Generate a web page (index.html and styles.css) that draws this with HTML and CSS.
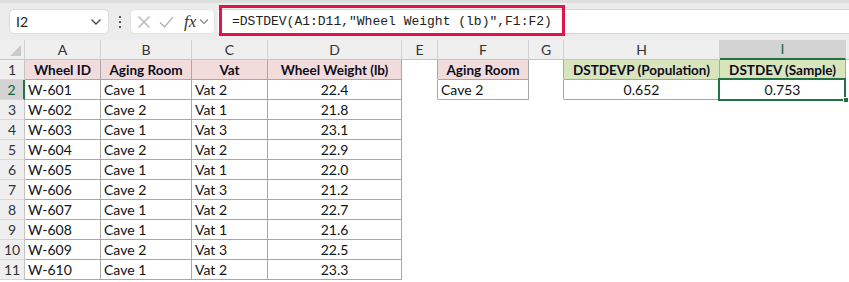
FILE: index.html
```html
<!DOCTYPE html>
<html>
<head>
    <meta charset="UTF-8">
    <title>DSTDEV</title>
    <link rel="stylesheet" href="styles.css">
</head>
<body>
    <div class="toolbar">
        <div class="namebox">
            <span>I2</span>
            <svg class="chev" width="12" height="8" viewBox="0 0 12 8"><path d="M1.5 1.5 L6 6 L10.5 1.5" fill="none" stroke="#444" stroke-width="1.3"/></svg>
        </div>
        <svg class="dots" width="4" height="12" viewBox="0 0 4 12"><rect x="1" y="0" width="2" height="2" fill="#555"/><rect x="1" y="5" width="2" height="2" fill="#555"/><rect x="1" y="10" width="2" height="2" fill="#555"/></svg>
        <div class="fxbox">
            <svg width="14" height="14" viewBox="0 0 14 14"><path d="M1.5 1.5 L12.5 12.5 M12.5 1.5 L1.5 12.5" stroke="#b4b4b4" stroke-width="1.3" fill="none"/></svg>
            <svg width="15" height="14" viewBox="0 0 15 14"><path d="M1 7.5 L5.5 12 L14 2" stroke="#b4b4b4" stroke-width="1.3" fill="none"/></svg>
            <span class="fx">fx</span>
            <svg class="chev" width="10" height="7" viewBox="0 0 10 7"><path d="M1 1.5 L5 5.5 L9 1.5" fill="none" stroke="#888" stroke-width="1.2"/></svg>
        </div>
        <div class="formula">
            <span class="formula-text">=DSTDEV(A1:D11,"Wheel Weight (lb)",F1:F2)</span>
            <div class="mark"></div>
        </div>
    </div>

    <div class="sheet">
        <div class="colhead corner"><div class="tri"></div></div>
        <div class="colhead">A</div>
        <div class="colhead">B</div>
        <div class="colhead">C</div>
        <div class="colhead">D</div>
        <div class="colhead">E</div>
        <div class="colhead">F</div>
        <div class="colhead">G</div>
        <div class="colhead">H</div>
        <div class="colhead active">I</div>
        <div class="colhead last"></div>

        <div class="rowhead">1</div>
        <div class="cell b head pink">Wheel ID</div>
        <div class="cell b head pink">Aging Room</div>
        <div class="cell b head pink">Vat</div>
        <div class="cell b head pink">Wheel Weight (lb)</div>
        <div class="cell edge"></div>
        <div class="cell b head pink">Aging Room</div>
        <div class="cell edge"></div>
        <div class="cell b head green">DSTDEVP (Population)</div>
        <div class="cell b head green">DSTDEV (Sample)</div>
        <div class="cell"></div>

        <div class="rowhead active">2</div>
        <div class="cell b">W-601</div>
        <div class="cell b">Cave 1</div>
        <div class="cell b">Vat 2</div>
        <div class="cell b num">22.4</div>
        <div class="cell edge"></div>
        <div class="cell b">Cave 2</div>
        <div class="cell edge"></div>
        <div class="cell b num">0.652</div>
        <div class="cell b num selected">0.753<div class="handle"></div></div>
        <div class="cell"></div>

        <div class="rowhead">3</div>
        <div class="cell b">W-602</div><div class="cell b">Cave 2</div><div class="cell b">Vat 1</div><div class="cell b num">21.8</div>
        <div class="cell"></div><div class="cell"></div><div class="cell"></div><div class="cell"></div><div class="cell"></div><div class="cell"></div>

        <div class="rowhead">4</div>
        <div class="cell b">W-603</div><div class="cell b">Cave 1</div><div class="cell b">Vat 3</div><div class="cell b num">23.1</div>
        <div class="cell"></div><div class="cell"></div><div class="cell"></div><div class="cell"></div><div class="cell"></div><div class="cell"></div>

        <div class="rowhead">5</div>
        <div class="cell b">W-604</div><div class="cell b">Cave 2</div><div class="cell b">Vat 2</div><div class="cell b num">22.9</div>
        <div class="cell"></div><div class="cell"></div><div class="cell"></div><div class="cell"></div><div class="cell"></div><div class="cell"></div>

        <div class="rowhead">6</div>
        <div class="cell b">W-605</div><div class="cell b">Cave 1</div><div class="cell b">Vat 1</div><div class="cell b num">22.0</div>
        <div class="cell"></div><div class="cell"></div><div class="cell"></div><div class="cell"></div><div class="cell"></div><div class="cell"></div>

        <div class="rowhead">7</div>
        <div class="cell b">W-606</div><div class="cell b">Cave 2</div><div class="cell b">Vat 3</div><div class="cell b num">21.2</div>
        <div class="cell"></div><div class="cell"></div><div class="cell"></div><div class="cell"></div><div class="cell"></div><div class="cell"></div>

        <div class="rowhead">8</div>
        <div class="cell b">W-607</div><div class="cell b">Cave 1</div><div class="cell b">Vat 2</div><div class="cell b num">22.7</div>
        <div class="cell"></div><div class="cell"></div><div class="cell"></div><div class="cell"></div><div class="cell"></div><div class="cell"></div>

        <div class="rowhead">9</div>
        <div class="cell b">W-608</div><div class="cell b">Cave 1</div><div class="cell b">Vat 1</div><div class="cell b num">21.6</div>
        <div class="cell"></div><div class="cell"></div><div class="cell"></div><div class="cell"></div><div class="cell"></div><div class="cell"></div>

        <div class="rowhead">10</div>
        <div class="cell b">W-609</div><div class="cell b">Cave 2</div><div class="cell b">Vat 3</div><div class="cell b num">22.5</div>
        <div class="cell"></div><div class="cell"></div><div class="cell"></div><div class="cell"></div><div class="cell"></div><div class="cell"></div>

        <div class="rowhead">11</div>
        <div class="cell b">W-610</div><div class="cell b">Cave 1</div><div class="cell b">Vat 2</div><div class="cell b num">23.3</div>
        <div class="cell"></div><div class="cell"></div><div class="cell"></div><div class="cell"></div><div class="cell"></div><div class="cell"></div>
    </div>
</body>
</html>
```

FILE: styles.css
```css
* {
    box-sizing: border-box;
}

body {
    margin: 0;
    width: 849px;
    height: 282px;
    overflow: hidden;
    font-family: Lato, "Open Sans", sans-serif;
    background-color: #fff;
}

/* barra de fórmulas */
.toolbar {
    height: 40px;
    background-color: #ececec;
    border-top: 3px solid #dedede;
    display: flex;
    align-items: center;
    padding: 0 0 0 9px;
    position: relative;
}

.namebox {
    width: 100px;
    height: 25px;
    background-color: #fff;
    border: 1px solid #dcdcdc;
    border-radius: 5px;
    display: flex;
    align-items: center;
    justify-content: space-between;
    padding: 0 6px 0 6px;
    font-size: 14px;
    color: #222;
}

.dots {
    margin: 0 8px 0 9px;
}

.fxbox {
    width: 85px;
    height: 25px;
    background-color: #fff;
    border: 1px solid #e2e2e2;
    border-radius: 5px;
    display: flex;
    align-items: center;
    gap: 8px;
    padding: 0 4px 0 6px;
}

.fx {
    font-family: "Liberation Serif", serif;
    font-style: italic;
    font-size: 17px;
    color: #333;
    margin-left: 2px;
}

.fxbox .chev {
    margin-left: -5px;
}

.formula {
    flex: 1;
    height: 25px;
    margin-left: 3px;
    background-color: #fff;
    border-top: 1px solid #d6d6d6;
    border-bottom: 1px solid #d6d6d6;
    display: flex;
    align-items: center;
    padding-left: 14px;
    position: relative;
}

.formula-text {
    font-family: "Liberation Mono", monospace;
    font-size: 13px;
    color: #222;
}

.mark {
    position: absolute;
    left: 1px;
    top: -5px;
    width: 346px;
    height: 31px;
    border: 3px solid #e0134a;
}

/* hoja */
.sheet {
    display: grid;
    grid-template-columns: 25px 76px 91px 76px 134px 36px 91px 35px 156px 126px 1fr;
    grid-auto-rows: 20px;
    font-size: 14px;
    color: #111;
}

.colhead {
    background-color: #efefef;
    border-right: 1px solid #d2d2d2;
    border-bottom: 1px solid #c4c4c4;
    text-align: center;
    line-height: 19px;
    color: #333;
}

.colhead.active {
    background-color: #d3d3d3;
    border-bottom: 2px solid #217346;
    color: #16603a;
    line-height: 18px;
}

.colhead.last {
    border-right: none;
}

.corner {
    position: relative;
}

.tri {
    position: absolute;
    right: 3px;
    bottom: 3px;
    width: 0;
    height: 0;
    border-left: 11px solid transparent;
    border-bottom: 11px solid #c9c9c9;
}

.rowhead {
    background-color: #efefef;
    border-right: 1px solid #c4c4c4;
    border-bottom: 1px solid #d8d8d8;
    text-align: center;
    line-height: 20px;
    color: #333;
}

.rowhead.active {
    background-color: #d3d3d3;
    border-right: 2px solid #217346;
    color: #16603a;
}

.cell {
    border-right: 1px solid transparent;
    border-bottom: 1px solid transparent;
    padding-left: 3px;
    line-height: 20px;
    white-space: nowrap;
    overflow: hidden;
}

.cell.b {
    border-right-color: #a8a8a8;
    border-bottom-color: #a8a8a8;
}

.cell.edge {
    border-right-color: #a8a8a8;
}

.head {
    font-weight: bold;
    font-size: 13.5px;
    text-align: center;
    padding-left: 0;
    color: #0c0c1e;
}

.pink {
    background-color: #f2dcdb;
}

.green {
    background-color: #d8e4bc;
}

.num {
    text-align: center;
    padding-left: 0;
}

.selected {
    position: relative;
    overflow: visible;
}

.selected::after {
    content: "";
    position: absolute;
    left: -2px;
    top: -2px;
    right: -1px;
    bottom: -2px;
    border: 2px solid #217346;
}

.handle {
    position: absolute;
    right: -4px;
    bottom: -4px;
    width: 6px;
    height: 6px;
    background-color: #217346;
    border: 1px solid #fff;
    z-index: 2;
}
```
